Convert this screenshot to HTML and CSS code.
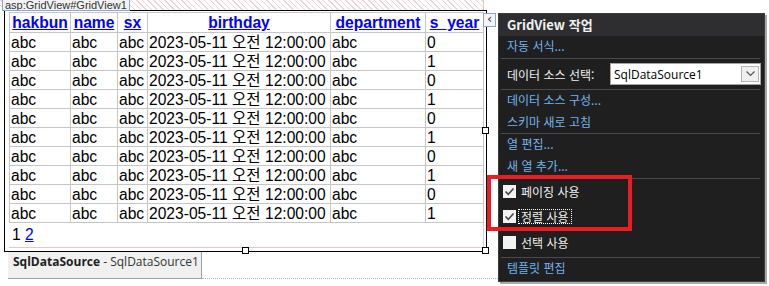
FILE: index.html
```html
<!DOCTYPE html>
<html lang="ko">

<head>
    <meta charset="UTF-8">
    <meta name="viewport" content="width=device-width, initial-scale=1.0">
    <title>GridView 작업</title>

    <link rel="stylesheet" href="styles.css">
</head>

<body>

    <div id="designer">
        <div class="hatch">
            <span class="tag">asp:GridView#GridView1</span>
        </div>

        <div class="frame">
            <div class="gridBox">
                <table class="grid">
                    <colgroup>
                        <col style="width: 61px">
                        <col style="width: 47px">
                        <col style="width: 30px">
                        <col style="width: 183px">
                        <col style="width: 95px">
                        <col style="width: 58px">
                    </colgroup>
                    <thead>
                        <tr>
                            <th><a href="#">hakbun</a></th>
                            <th><a href="#">name</a></th>
                            <th><a href="#">sx</a></th>
                            <th><a href="#">birthday</a></th>
                            <th><a href="#">department</a></th>
                            <th><a href="#">s_year</a></th>
                        </tr>
                    </thead>
                    <tbody>
                        <tr><td>abc</td><td>abc</td><td>abc</td><td>2023-05-11 오전 12:00:00</td><td>abc</td><td>0</td></tr>
                        <tr><td>abc</td><td>abc</td><td>abc</td><td>2023-05-11 오전 12:00:00</td><td>abc</td><td>1</td></tr>
                        <tr><td>abc</td><td>abc</td><td>abc</td><td>2023-05-11 오전 12:00:00</td><td>abc</td><td>0</td></tr>
                        <tr><td>abc</td><td>abc</td><td>abc</td><td>2023-05-11 오전 12:00:00</td><td>abc</td><td>1</td></tr>
                        <tr><td>abc</td><td>abc</td><td>abc</td><td>2023-05-11 오전 12:00:00</td><td>abc</td><td>0</td></tr>
                        <tr><td>abc</td><td>abc</td><td>abc</td><td>2023-05-11 오전 12:00:00</td><td>abc</td><td>1</td></tr>
                        <tr><td>abc</td><td>abc</td><td>abc</td><td>2023-05-11 오전 12:00:00</td><td>abc</td><td>0</td></tr>
                        <tr><td>abc</td><td>abc</td><td>abc</td><td>2023-05-11 오전 12:00:00</td><td>abc</td><td>1</td></tr>
                        <tr><td>abc</td><td>abc</td><td>abc</td><td>2023-05-11 오전 12:00:00</td><td>abc</td><td>0</td></tr>
                        <tr><td>abc</td><td>abc</td><td>abc</td><td>2023-05-11 오전 12:00:00</td><td>abc</td><td>1</td></tr>
                    </tbody>
                </table>
                <div class="pager">1 <a href="#">2</a></div>
            </div>

            <span class="handle bottomMid"></span>
            <span class="handle rightMid"></span>
            <span class="handle corner"></span>
        </div>

        <div class="sqlRow">
            <div class="sqlBox"><b>SqlDataSource</b> - SqlDataSource1</div>
            <div class="dots"></div>
        </div>
    </div>

    <span class="tagBtn">&lsaquo;</span>

    <div class="smart">
        <div class="smartHead">GridView 작업</div>
        <div class="link">자동 서식...</div>
        <div class="sep"></div>
        <div class="dsRow">
            <span>데이터 소스 선택:</span>
            <div class="select">
                <span class="selText">SqlDataSource1</span>
                <span class="selBtn">
                    <svg width="9" height="6" viewBox="0 0 9 6"><polyline points="0.5,0.5 4.5,4.5 8.5,0.5" fill="none" stroke="#555" stroke-width="1.2"/></svg>
                </span>
            </div>
        </div>
        <div class="sep"></div>
        <div class="link">데이터 소스 구성...</div>
        <div class="link short">스키마 새로 고침</div>
        <div class="sep"></div>
        <div class="link">열 편집...</div>
        <div class="link">새 열 추가...</div>
        <div class="sep"></div>
        <div class="checks">
            <div class="check first">
                <span class="box"><svg width="11" height="11" viewBox="0 0 11 11"><polyline points="1.5,5.5 4.3,8.3 9.5,2.5" fill="none" stroke="#444" stroke-width="1.6"/></svg></span>
                <span class="lbl">페이징 사용</span>
            </div>
            <div class="check">
                <span class="box"><svg width="11" height="11" viewBox="0 0 11 11"><polyline points="1.5,5.5 4.3,8.3 9.5,2.5" fill="none" stroke="#444" stroke-width="1.6"/></svg></span>
                <span class="lbl focus">정렬 사용</span>
            </div>
            <div class="check">
                <span class="box"></span>
                <span class="lbl">선택 사용</span>
            </div>
        </div>
        <div class="sep"></div>
        <div class="link">템플릿 편집</div>
    </div>

    <div class="redBox"></div>

</body>

</html>
```

FILE: styles.css
```css
body {
    margin: 0;
    background: #fff;
    width: 769px;
    height: 286px;
    overflow: hidden;
}

#designer {
    width: 500px;
}

.hatch {
    width: 483px;
    height: 10px;
    border-right: 1px solid #e4c8c8;
    background-image: repeating-linear-gradient(45deg, #fff 0px, #fff 3px, #efd3d3 3px, #efd3d3 4px);
}

.tag {
    display: inline-block;
    box-sizing: border-box;
    margin-left: 2px;
    height: 11px;
    padding: 0 2px;
    border: 1px solid #8ea6c9;
    border-top: none;
    background: #f2f2f2;
    color: #333;
    font-family: "Liberation Sans", sans-serif;
    font-size: 11px;
    line-height: 10px;
    overflow: hidden;
    position: relative;
    z-index: 1;
    vertical-align: top;
}

.frame {
    position: relative;
    box-sizing: border-box;
    margin-left: 4px;
    width: 483px;
    height: 242px;
    border: 1px solid #000;
}

.gridBox {
    box-sizing: border-box;
    width: 475px;
    margin: 1px 0 0 4px;
    border-right: 1px solid #e4c8c8;
    border-bottom: 1px solid #e4c8c8;
}

.grid {
    border-collapse: collapse;
    table-layout: fixed;
    width: 474px;
    font-family: "Liberation Sans", "Noto Sans CJK KR", sans-serif;
    font-size: 15.6px;
    color: #000;
}

.grid th,
.grid td {
    border: 1px solid #c6c6c6;
    padding: 0 1px;
    white-space: nowrap;
    overflow: hidden;
    line-height: 17px;
}

.grid th {
    height: 19px;
    font-weight: bold;
    text-align: center;
}

.grid td {
    height: 18px;
    text-align: left;
}

.grid a,
.pager a {
    color: #0000ff;
}

.pager {
    height: 24px;
    padding-left: 3px;
    line-height: 24px;
    font-family: "Liberation Sans", sans-serif;
    font-size: 15.6px;
}

.handle {
    position: absolute;
    width: 5px;
    height: 5px;
    border: 1px solid #000;
    background: #fff;
}

.bottomMid {
    left: 237px;
    top: 236px;
}

.rightMid {
    left: 477px;
    top: 116px;
}

.corner {
    left: 477px;
    top: 236px;
}

.sqlRow {
    display: flex;
}

.sqlBox {
    margin-left: 8px;
    width: 194px;
    height: 27px;
    box-sizing: border-box;
    padding-left: 5px;
    background: #f0f0f0;
    border-right: 1px solid #a0a0a0;
    border-bottom: 1px solid #a0a0a0;
    font-family: "Open Sans", sans-serif;
    font-size: 12px;
    line-height: 19px;
    color: #333;
}

.sqlBox b {
    color: #1e1e1e;
    font-weight: 700;
}

.dots {
    flex: 1;
    height: 26px;
    border-bottom: 1px dotted #b4b4b4;
}

.tagBtn {
    position: absolute;
    left: 483px;
    top: 13px;
    box-sizing: border-box;
    width: 13px;
    height: 14px;
    border: 1px solid #8ea6c9;
    background: #f4f4f4;
    color: #333;
    font-family: "DejaVu Sans", sans-serif;
    font-size: 13px;
    line-height: 10px;
    text-align: center;
}

.smart {
    position: absolute;
    left: 498px;
    top: 13px;
    box-sizing: border-box;
    width: 267px;
    height: 269px;
    background: #1f1f1f;
    border: 1px solid #3c3c3c;
    box-shadow: 2px 2px 0 #a9a9a9;
    font-family: "Noto Sans CJK KR", sans-serif;
    font-size: 12px;
    color: #f1f1f1;
}

.smartHead {
    height: 22px;
    padding-left: 8px;
    background: #2e2e30;
    font-size: 13px;
    font-weight: bold;
    line-height: 21px;
}

.link {
    height: 22px;
    padding-left: 8px;
    line-height: 20px;
    color: #72b3ec;
}

.link.short {
    height: 21px;
}

.sep {
    height: 1px;
    margin: 0 4px 0 2px;
    background: #4a4a4a;
}

.dsRow {
    height: 30px;
    display: flex;
    align-items: center;
    justify-content: space-between;
    padding: 0 3px 0 8px;
}

.select {
    display: flex;
    align-items: center;
    box-sizing: border-box;
    width: 151px;
    height: 22px;
    background: #fff;
    border: 1px solid #a5a5a5;
    color: #000;
}

.selText {
    flex: 1;
    padding-left: 3px;
    font-family: "Open Sans", sans-serif;
    font-size: 12px;
}

.selBtn {
    display: flex;
    align-items: center;
    justify-content: center;
    box-sizing: border-box;
    width: 18px;
    height: 16px;
    margin-right: 1px;
    background: #f0f0f0;
    border: 1px solid #b5b5b5;
}

.checks {
    height: 78px;
}

.check {
    height: 26px;
    display: flex;
    align-items: center;
    padding-left: 4px;
}

.check.first {
    height: 24px;
}

.box {
    display: flex;
    align-items: center;
    justify-content: center;
    width: 13px;
    height: 13px;
    background: #f3f3f3;
}

.lbl {
    margin-left: 2px;
    padding: 0 2px;
    border: 1px dotted transparent;
    line-height: 13px;
}

.lbl.focus {
    border-color: #fff;
}

.redBox {
    position: absolute;
    left: 487px;
    top: 175px;
    box-sizing: border-box;
    width: 145px;
    height: 56px;
    border: 4px solid #ec1c24;
}
```
